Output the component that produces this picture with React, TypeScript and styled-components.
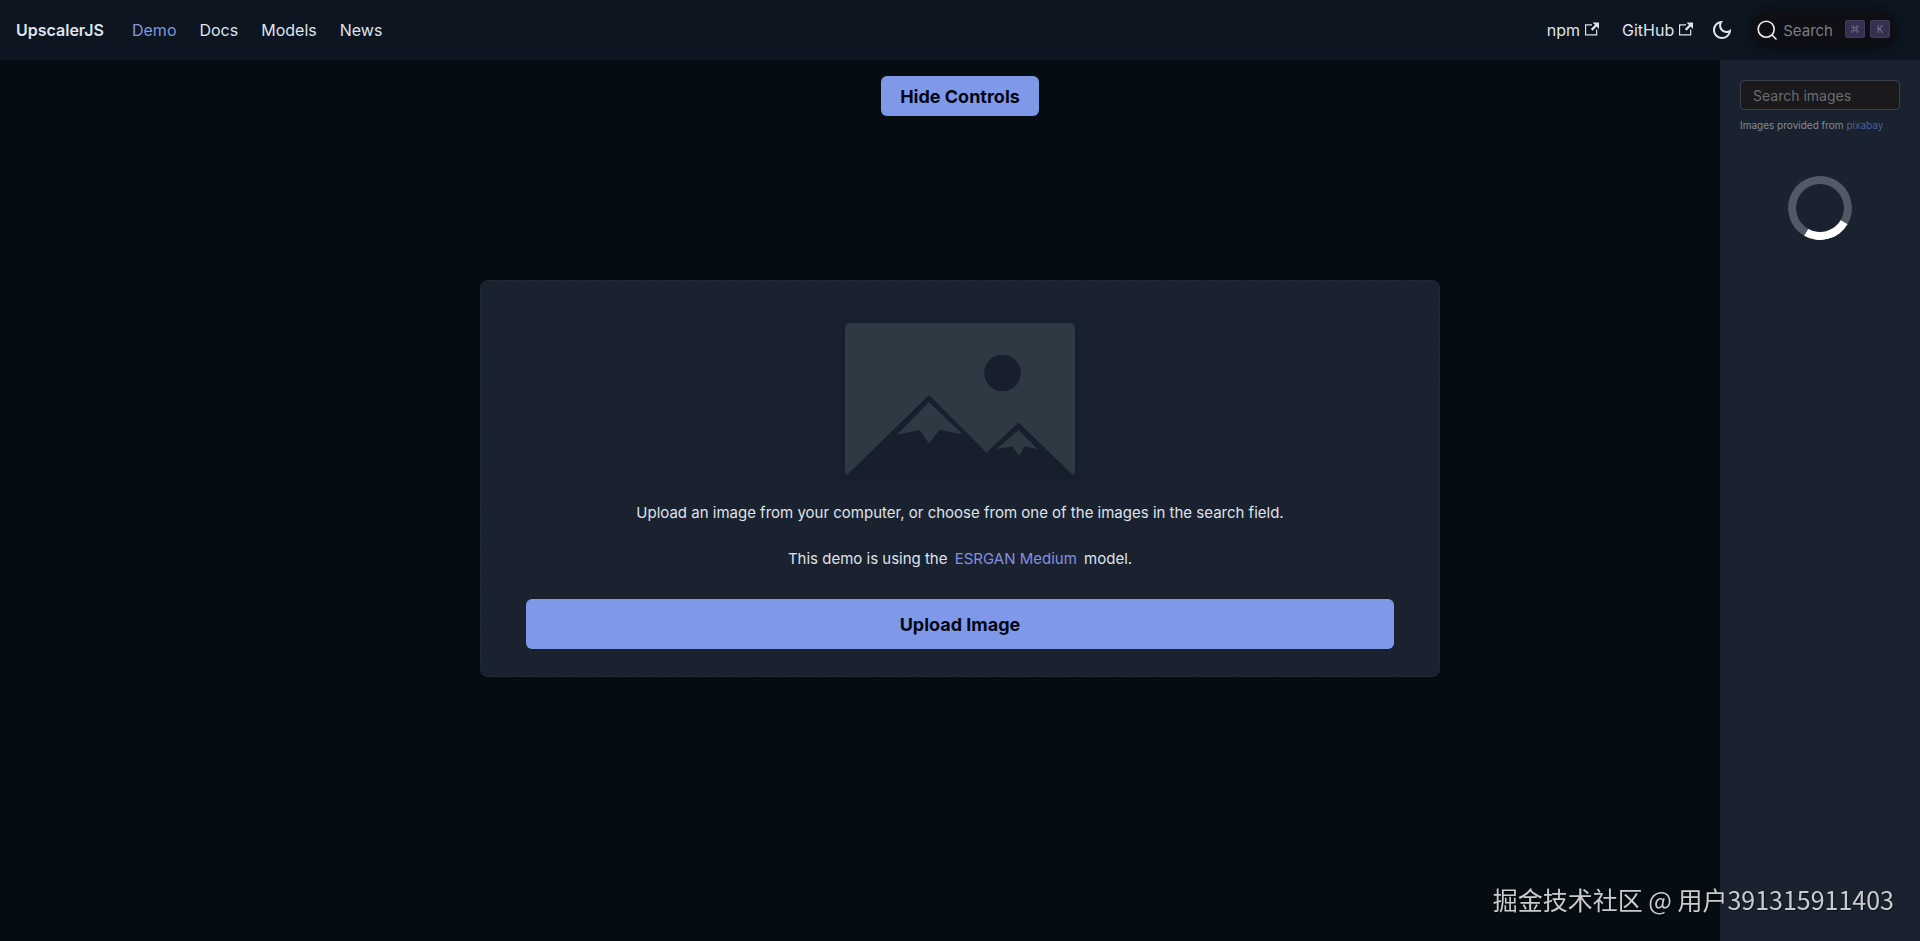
import React from 'react';
import styled, { createGlobalStyle } from 'styled-components';

const accent = '#8098e8';
const panel = '#1a2230';

const GlobalStyle = createGlobalStyle`
  *, *::before, *::after { box-sizing: border-box; }
  body {
    margin: 0;
    background: #060d12;
    color: #dfe3ea;
    font-family: Inter, "Liberation Sans", sans-serif;
    font-size: 16px;
    line-height: 26px;
  }
  a { text-decoration: none; color: inherit; }
  button, input { font-family: inherit; }
`;

const Page = styled.div`
  display: flex;
  flex-direction: column;
  min-height: 100vh;
`;

const Navbar = styled.nav`
  display: flex;
  align-items: center;
  justify-content: space-between;
  height: 60px;
  padding: 0 24px 0 16px;
  background: #0c1520;
`;

const NavGroup = styled.div<{ $gap: number }>`
  display: flex;
  align-items: center;
  gap: ${({ $gap }) => $gap}px;
`;

const Brand = styled.a`
  margin-right: 5px;
  font-weight: 600;
`;

const NavLink = styled.a<{ $active?: boolean }>`
  display: flex;
  align-items: center;
  gap: 5px;
  color: ${({ $active }) => ($active ? '#7d97dc' : 'inherit')};

  svg { margin-bottom: 2px; }
`;

const ThemeToggle = styled.button`
  display: flex;
  padding: 0;
  border: 0;
  background: none;
  color: #e3e6ec;
`;

const SearchButton = styled.button`
  display: flex;
  align-items: center;
  height: 36px;
  padding: 0 6px;
  border: 0;
  border-radius: 18px;
  background: #0d0f15;
  box-shadow: 0 0 6px 2px #0d0f15;
  color: #7c7d82;
  font-size: 15px;
`;

const SearchLabel = styled.span`
  margin: 0 12px 0 6px;
`;

const Key = styled.kbd`
  display: flex;
  align-items: center;
  justify-content: center;
  width: 20px;
  height: 18px;
  margin: 0 5px 2px 0;
  border-radius: 3px;
  background: #36304f;
  box-shadow: inset 0 0 0 1px #413c5e;
  color: #74728c;
  font-family: Inter, "DejaVu Sans", sans-serif;
  font-size: 10px;
  line-height: 18px;

  &:last-child { margin-right: 0; }
`;

const Body = styled.div`
  flex: 1;
  display: grid;
  grid-template-columns: 200px minmax(0, 1fr) 200px;
`;

const Main = styled.main`
  grid-column: 2;
  display: flex;
  flex-direction: column;
  align-items: center;
  padding: 16px 0 100px;
`;

const PrimaryButton = styled.button<{ $wide?: boolean }>`
  width: ${({ $wide }) => ($wide ? '100%' : 'auto')};
  height: ${({ $wide }) => ($wide ? 50 : 40)}px;
  padding: 0 19px;
  border: 0;
  border-radius: 6px;
  background: ${accent};
  color: #030714;
  font-size: 18px;
  font-weight: 700;
`;

const Stage = styled.div`
  flex: 1;
  display: flex;
  align-items: center;
  justify-content: center;
  width: 100%;
`;

const UploadCard = styled.section`
  display: flex;
  flex-direction: column;
  align-items: center;
  width: 100%;
  max-width: 960px;
  padding: 42px 45px 27px;
  border: 1px dashed #222d3a;
  border-radius: 8px;
  background: ${panel};
`;

const Illustration = styled.svg`
  display: block;
  margin-bottom: 24px;
  border-radius: 5px;
  box-shadow: 0 2px 6px 4px #171f2c;
`;

const Text = styled.p`
  margin: 0 0 20px;
  font-size: 15px;
  text-align: center;
`;

const ModelLink = styled.a`
  margin: 0 3px;
  color: #8390e0;
`;

const UploadRow = styled.div`
  width: 100%;
  padding-top: 7px;
`;

const Sidebar = styled.aside`
  grid-column: 3;
  padding: 20px;
  background: ${panel};
`;

const ImageSearch = styled.input`
  display: block;
  width: 100%;
  height: 30px;
  padding: 0 12px;
  border: 1px solid #3c4048;
  border-radius: 4px;
  background: #1a1a1d;
  color: #dfe3ea;
  font-size: 14px;

  &::placeholder { color: #6b6c70; opacity: 1; }
`;

const Credit = styled.p`
  margin: 6px 0 0;
  color: #838b98;
  font-size: 10px;
  line-height: 18px;
  white-space: nowrap;

  a { color: #4e5f98; }
`;

const Spinner = styled.div`
  width: 64px;
  height: 64px;
  margin: 42px auto 0;
  border: 8px solid #515966;
  border-bottom-color: #fff;
  border-radius: 50%;
  transform: rotate(-15deg);
`;

const Watermark = styled.div`
  position: fixed;
  right: 26px;
  bottom: 24px;
  color: #c9cbcf;
  font-family: "Noto Sans CJK SC", sans-serif;
  font-size: 25px;
  line-height: 36px;
  text-shadow: 1px 1px 1px #0008;
  white-space: nowrap;
  pointer-events: none;
`;

const ExternalIcon = () => (
  <svg width="14" height="14" viewBox="0 0 24 24" fill="currentColor" aria-hidden="true">
    <path d="M21 13v10h-21v-19h12v2h-10v15h17v-8h2zm3-12h-10.988l4.035 4-6.977 7.07 2.828 2.828 6.977-7.07 4.125 4.172v-11z" />
  </svg>
);

const MoonIcon = () => (
  <svg width="24" height="24" viewBox="0 0 24 24" fill="currentColor" aria-hidden="true">
    <path d="M9.37,5.51C9.19,6.15,9.1,6.82,9.1,7.5c0,4.08,3.32,7.4,7.4,7.4c0.68,0,1.35-0.09,1.99-0.27C17.45,17.19,14.93,19,12,19 c-3.86,0-7-3.14-7-7C5,9.07,6.81,6.55,9.37,5.51z M12,3c-4.97,0-9,4.03-9,9s4.03,9,9,9s9-4.03,9-9c0-0.46-0.04-0.92-0.1-1.36 c-0.98,1.37-2.58,2.26-4.4,2.26c-2.98,0-5.4-2.42-5.4-5.4c0-1.81,0.89-3.42,2.26-4.4C12.92,3.04,12.46,3,12,3L12,3z" />
  </svg>
);

const SearchIcon = () => (
  <svg width="20" height="20" viewBox="0 0 20 20" fill="none" stroke="#eceef2" strokeWidth="1.6" strokeLinecap="round" aria-hidden="true">
    <circle cx="9.2" cy="9.2" r="8" />
    <path d="M15 15l4 4" />
  </svg>
);

const CommandIcon = () => (
  <svg width="8" height="8" viewBox="0 0 15 15" fill="none" stroke="currentColor" strokeWidth="1.6" aria-hidden="true">
    <path d="M5 5h5v5H5zM5 5H3a2 2 0 1 1 2-2zM10 5V3a2 2 0 1 1 2 2zM10 10h2a2 2 0 1 1-2 2zM5 10v2a2 2 0 1 1-2-2z" />
  </svg>
);

const Mountains = () => (
  <Illustration width="230" height="153" viewBox="0 0 230 153" aria-hidden="true">
    <rect width="230" height="153" fill="#2f3944" />
    <circle cx="157.5" cy="50" r="18.3" fill="#171f2c" />
    <path d="M1 153L84 72l57.500 57.500L173.500 99.500 229 153z" fill="#171f2c" />
    <path d="M84 79l33.500 32.300-23-4.600L84 120.500 74.500 107l-23 5z" fill="#2f3944" />
    <path d="M173.700 107L192.500 126l-13-2.500-5.500 9.500-6.500-9.500-16 2.500z" fill="#2f3944" />
  </Illustration>
);

const navItems = ['Demo', 'Docs', 'Models', 'News'];
const externalItems = ['npm', 'GitHub'];

export default function App() {
  return (
    <Page>
      <GlobalStyle />
      <Navbar aria-label="Main">
        <NavGroup $gap={23}>
          <Brand href="#home">UpscalerJS</Brand>
          {navItems.map((item) => (
            <NavLink key={item} href={`#${item.toLowerCase()}`} $active={item === 'Demo'}>
              {item}
            </NavLink>
          ))}
        </NavGroup>
        <NavGroup $gap={17}>
          <NavGroup $gap={23}>
            {externalItems.map((item) => (
              <NavLink key={item} href={`#${item.toLowerCase()}`}>
                {item}
                <ExternalIcon />
              </NavLink>
            ))}
          </NavGroup>
          <ThemeToggle type="button" aria-label="Toggle dark mode">
            <MoonIcon />
          </ThemeToggle>
          <SearchButton type="button">
            <SearchIcon />
            <SearchLabel>Search</SearchLabel>
            <Key>
              <CommandIcon />
            </Key>
            <Key>K</Key>
          </SearchButton>
        </NavGroup>
      </Navbar>
      <Body>
        <Main>
          <PrimaryButton type="button">Hide Controls</PrimaryButton>
          <Stage>
            <UploadCard>
              <Mountains />
              <Text>Upload an image from your computer, or choose from one of the images in the search field.</Text>
              <Text>
                This demo is using the <ModelLink href="#esrgan-medium">ESRGAN Medium</ModelLink> model.
              </Text>
              <UploadRow>
                <PrimaryButton type="button" $wide>
                  Upload Image
                </PrimaryButton>
              </UploadRow>
            </UploadCard>
          </Stage>
        </Main>
        <Sidebar>
          <ImageSearch type="text" placeholder="Search images" aria-label="Search images" />
          <Credit>
            Images provided from <a href="#pixabay">pixabay</a>
          </Credit>
          <Spinner role="status" aria-label="Loading" />
        </Sidebar>
      </Body>
      <Watermark>掘金技术社区 @ 用户391315911403</Watermark>
    </Page>
  );
}
